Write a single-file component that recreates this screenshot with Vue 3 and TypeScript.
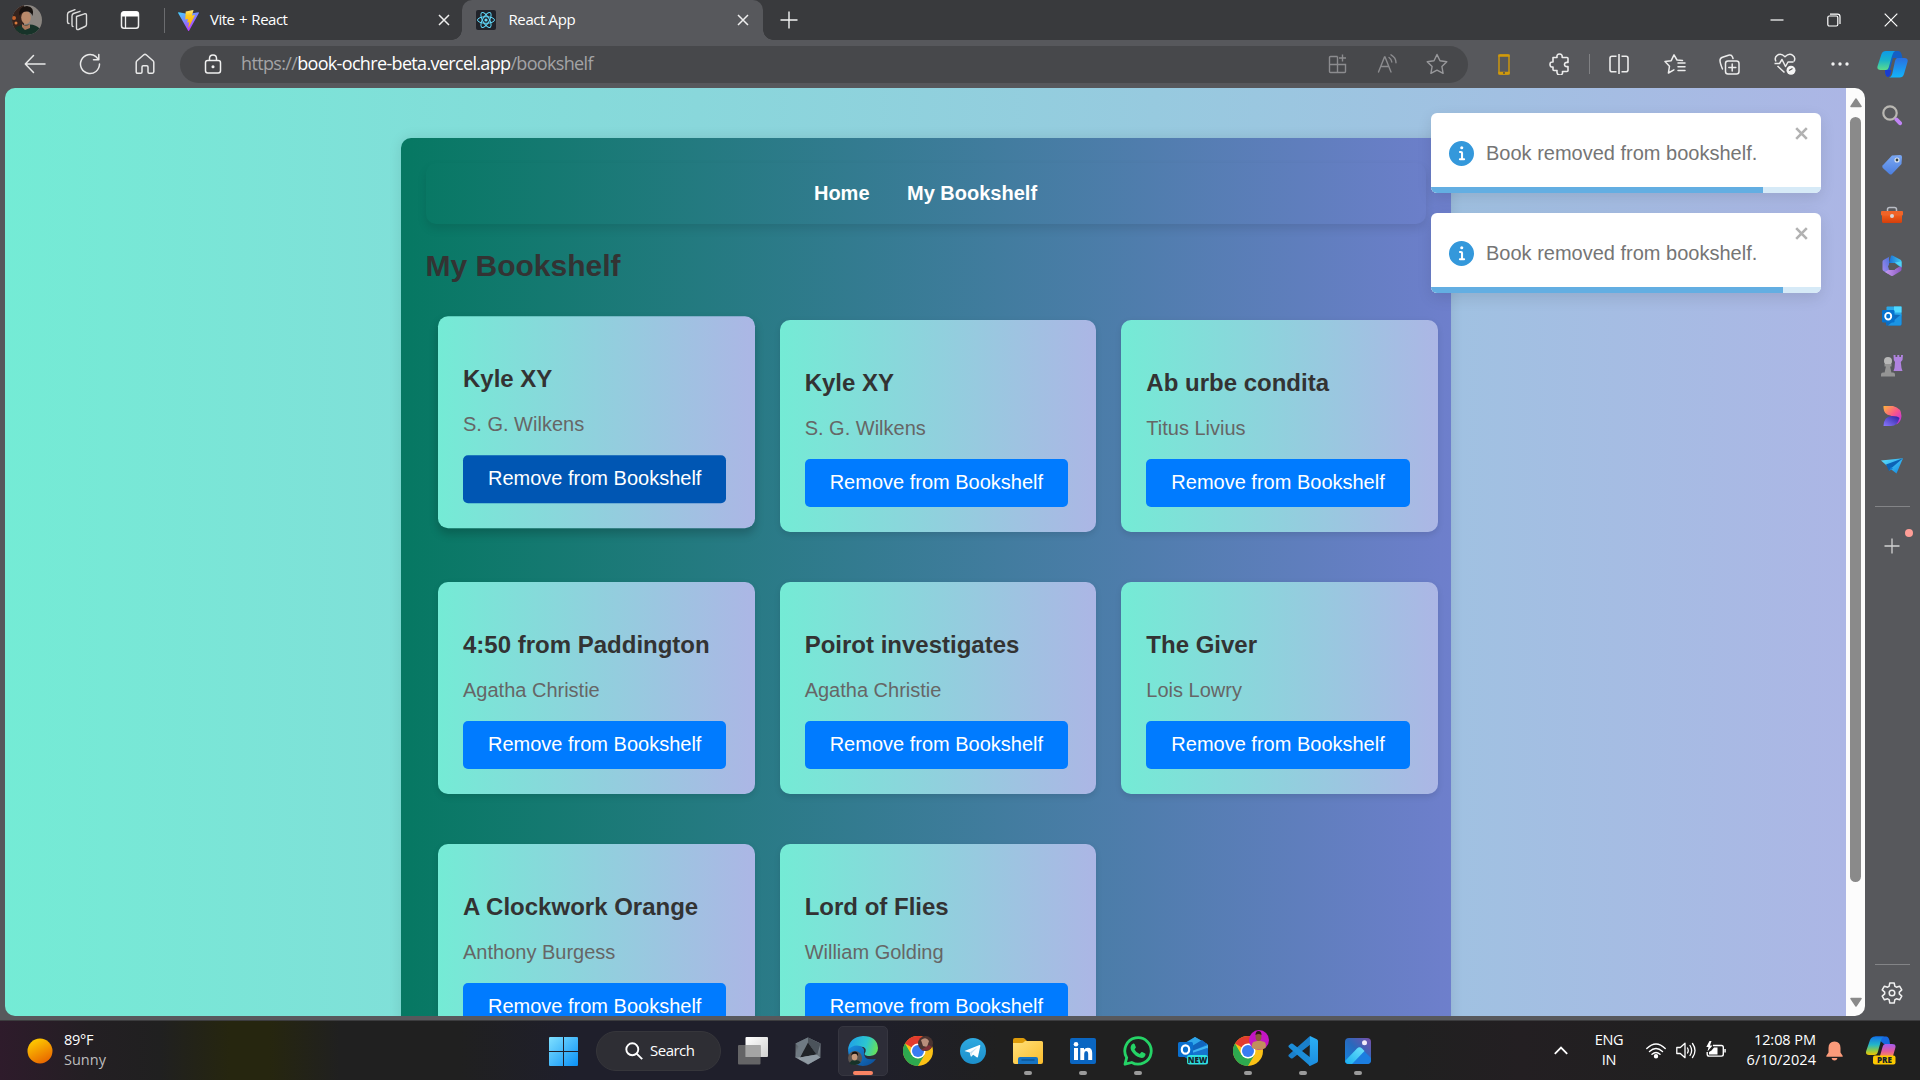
<script setup lang="ts">
interface Book {
  title: string
  author: string
  hovered?: boolean
}

interface Toast {
  id: number
  text: string
  progress: number
}

const books: Book[] = [
  { title: 'Kyle XY', author: 'S. G. Wilkens', hovered: true },
  { title: 'Kyle XY', author: 'S. G. Wilkens' },
  { title: 'Ab urbe condita', author: 'Titus Livius' },
  { title: '4:50 from Paddington', author: 'Agatha Christie' },
  { title: 'Poirot investigates', author: 'Agatha Christie' },
  { title: 'The Giver', author: 'Lois Lowry' },
  { title: 'A Clockwork Orange', author: 'Anthony Burgess' },
  { title: 'Lord of Flies', author: 'William Golding' },
]

const toasts: Toast[] = [
  { id: 1, text: 'Book removed from bookshelf.', progress: 85.1 },
  { id: 2, text: 'Book removed from bookshelf.', progress: 90.3 },
]
</script>

<template>
  <div class="screen">
    <svg class="defs" width="0" height="0">
      <defs>
        <linearGradient id="gVite" x1="0" y1="0" x2="0.6" y2="1"><stop offset="0" stop-color="#41d1ff" /><stop offset="1" stop-color="#bd34fe" /></linearGradient>
        <linearGradient id="gBolt" x1="0" y1="0" x2="0" y2="1"><stop offset="0" stop-color="#ffea83" /><stop offset="0.3" stop-color="#ffcc20" /><stop offset="1" stop-color="#ffa800" /></linearGradient>
        <linearGradient id="gCopA" x1="0" y1="0" x2="0" y2="1"><stop offset="0" stop-color="#0c9be8" /><stop offset="0.5" stop-color="#1bb3c8" /><stop offset="1" stop-color="#5ddc8a" /></linearGradient>
        <linearGradient id="gCopB" x1="0" y1="0" x2="0" y2="1"><stop offset="0" stop-color="#2a6fe0" /><stop offset="1" stop-color="#12b4fb" /></linearGradient>
        <linearGradient id="gPreA" x1="0" y1="0" x2="0" y2="1"><stop offset="0" stop-color="#1273e8" /><stop offset="0.45" stop-color="#23b6c9" /><stop offset="0.75" stop-color="#8bc94a" /><stop offset="1" stop-color="#f2c400" /></linearGradient>
        <linearGradient id="gPreB" x1="0" y1="0" x2="0" y2="1"><stop offset="0" stop-color="#a35cf0" /><stop offset="0.6" stop-color="#e35a9c" /><stop offset="1" stop-color="#f98a5a" /></linearGradient>
        <linearGradient id="gSun" x1="0.2" y1="0" x2="0.7" y2="1"><stop offset="0" stop-color="#ffd000" /><stop offset="1" stop-color="#e86400" /></linearGradient>
        <linearGradient id="gWin" x1="0" y1="0" x2="1" y2="1"><stop offset="0" stop-color="#7fe0ff" /><stop offset="1" stop-color="#0a90f5" /></linearGradient>
        <linearGradient id="gTag" x1="0" y1="0" x2="0" y2="1"><stop offset="0" stop-color="#7aa7f2" /><stop offset="1" stop-color="#4c7fe0" /></linearGradient>
        <linearGradient id="gBox" x1="0" y1="0" x2="0" y2="1"><stop offset="0" stop-color="#f4611d" /><stop offset="1" stop-color="#d43f0c" /></linearGradient>
        <linearGradient id="gM1" x1="0" y1="0" x2="1" y2="0"><stop offset="0" stop-color="#1a6fd6" /><stop offset="1" stop-color="#3fc9f2" /></linearGradient>
        <linearGradient id="gM2" x1="0" y1="1" x2="1" y2="0"><stop offset="0" stop-color="#a98af0" /><stop offset="1" stop-color="#3b6ed6" /></linearGradient>
        <linearGradient id="gM3" x1="0" y1="0" x2="1" y2="0"><stop offset="0" stop-color="#c79bf2" /><stop offset="1" stop-color="#8a58c0" /></linearGradient>
        <linearGradient id="gDesA" x1="0" y1="0" x2="1" y2="1"><stop offset="0" stop-color="#ffb43c" /><stop offset="0.5" stop-color="#f8568a" /><stop offset="1" stop-color="#b12bf5" /></linearGradient>
        <linearGradient id="gDesB" x1="0" y1="1" x2="1" y2="0"><stop offset="0" stop-color="#8a78ff" /><stop offset="1" stop-color="#2a1f9e" /></linearGradient>
        <linearGradient id="gSend" x1="0" y1="0" x2="1" y2="1"><stop offset="0" stop-color="#5fe3ff" /><stop offset="1" stop-color="#0f86e0" /></linearGradient>
        <linearGradient id="gEdgeA" x1="0" y1="0.3" x2="1" y2="0.5"><stop offset="0" stop-color="#1fa0e8" /><stop offset="0.6" stop-color="#2cc6d0" /><stop offset="1" stop-color="#66e05a" /></linearGradient>
        <linearGradient id="gEdgeB" x1="0" y1="0" x2="1" y2="1"><stop offset="0" stop-color="#1b8fe0" /><stop offset="1" stop-color="#0b4a94" /></linearGradient>
        <linearGradient id="gFold" x1="0" y1="0" x2="1" y2="1"><stop offset="0" stop-color="#ffe07a" /><stop offset="1" stop-color="#fbbd2c" /></linearGradient>
        <linearGradient id="gTele" x1="0" y1="0" x2="0" y2="1"><stop offset="0" stop-color="#2fa9e0" /><stop offset="1" stop-color="#1c8fcb" /></linearGradient>
        <linearGradient id="gVs" x1="0" y1="0" x2="0" y2="1"><stop offset="0" stop-color="#2bb0f5" /><stop offset="1" stop-color="#1c8de0" /></linearGradient>
        <linearGradient id="gPho" x1="0" y1="1" x2="1" y2="0"><stop offset="0" stop-color="#1484e0" /><stop offset="0.5" stop-color="#2869bd" /><stop offset="1" stop-color="#7a4fa8" /></linearGradient>
        <linearGradient id="gPho2" x1="0" y1="1" x2="1" y2="0"><stop offset="0" stop-color="#18aef0" /><stop offset="1" stop-color="#6fe3fb" /></linearGradient>
        <linearGradient id="gSq" x1="0" y1="0" x2="1" y2="1"><stop offset="0" stop-color="#ffffff" /><stop offset="1" stop-color="#d0d0d0" /></linearGradient>
        <linearGradient id="gHex" x1="0" y1="0" x2="1" y2="1"><stop offset="0" stop-color="#3c4248" /><stop offset="0.5" stop-color="#98a2aa" /><stop offset="1" stop-color="#474e55" /></linearGradient>
        <clipPath id="cAv"><circle cx="15" cy="15" r="15" /></clipPath>
        <clipPath id="cPho"><rect width="26" height="26" rx="4" /></clipPath>
      </defs>
    </svg>

    <!-- tab strip -->
    <header class="tabs">
      <svg class="avatar" width="30" height="30" viewBox="0 0 30 30">
        <g clip-path="url(#cAv)">
          <rect width="30" height="30" fill="#8a8580" /><rect width="12" height="30" fill="#35241e" />
          <circle cx="2" cy="13" r="2" fill="#c4622c" /><circle cx="4" cy="18" r="1.500" fill="#d97a3c" />
          <path d="M2 30V24q6-5 11-4 10-2 15 4v6z" fill="#173329" />
          <ellipse cx="14" cy="12.500" rx="4.800" ry="6.500" fill="#b98a6a" />
          <path d="M7.500 10.500Q6 1.500 15 1q8 1 5.500 10-1.500-4.500-5.500-4.500-5 0-7.500 4z" fill="#17120f" />
          <path d="M10 19q4 3 8 0l0 4-5 2-3-3z" fill="#a8775a" />
        </g>
      </svg>
      <div class="cell work">
        <svg width="24" height="24" viewBox="0 0 24 24" fill="none" stroke="#dcdcdc" stroke-width="1.400" stroke-linejoin="round" stroke-linecap="round">
          <path d="M11.500 8.500l8-2.700q2-.5 2 1.500v9.200q0 1.500-1.500 2l-6.500 3q-2 .6-2-1.500zM8 18.500q-1 0-1-1.500V8q0-1.800 1.500-2.500L15 3.300M4 15.500q-1.500 0-1.500-1.500V6.500q0-1.800 1.500-2.500l6-2.300" />
        </svg>
      </div>
      <div class="cell tabact">
        <svg width="20" height="20" viewBox="0 0 20 20"><rect x="1.500" y="1.800" width="17" height="16.500" rx="2.500" fill="none" stroke="#eee" stroke-width="1.500" /><path d="M1.500 3.500q0-2 2-2h13q2 0 2 2V6.500h-17z" fill="#fff" /><path d="M5.500 6v12" stroke="#eee" stroke-width="1.300" /></svg>
      </div>
      <i class="tab-sep"></i>
      <div class="tab idle">
        <svg class="fav" width="21" height="21" viewBox="0 0 256 257"><path fill="url(#gVite)" d="M255.200 37.900L134.900 252.900c-2.500 4.400-8.900 4.500-11.400 0L.8 37.900C-1.900 33.100 2.200 27.300 7.600 28.300L128 49.800c.8.100 1.600.1 2.300 0L248.200 28.300c5.400-1 9.600 4.700 7 9.600z" /><path fill="url(#gBolt)" d="M185.400 0L96.400 17.500c-1.500.3-2.500 1.500-2.600 3l-5.500 92.500c-.1 2.200 1.900 3.900 4 3.400l24.800-5.700c2.300-.5 4.400 1.500 3.900 3.800l-7.400 36.100c-.5 2.400 1.800 4.500 4.100 3.800l15.300-4.700c2.400-.7 4.600 1.400 4.100 3.800l-11.700 56.700c-.7 3.500 4 5.500 6 2.500l1.300-2 72.600-144.900c1.200-2.400-.9-5.200-3.500-4.700l-25.500 4.900c-2.400.5-4.400-1.800-3.800-4.100l16.700-57.700c.7-2.300-1.400-4.600-3.800-4.100z" /></svg>
        <span>Vite + React</span>
        <svg class="x" width="12" height="12" viewBox="0 0 12 12"><path d="M1 1l10 10M11 1L1 11" stroke="#eee" stroke-width="1.500" /></svg>
      </div>
      <div class="tab active">
        <svg class="fav" width="20" height="20" viewBox="0 0 20 20"><rect width="20" height="20" rx="2" fill="#20232a" /><g fill="none" stroke="#61dafb" stroke-width="1"><ellipse cx="10" cy="10" rx="8.500" ry="3.300" /><ellipse cx="10" cy="10" rx="8.500" ry="3.300" transform="rotate(60 10 10)" /><ellipse cx="10" cy="10" rx="8.500" ry="3.300" transform="rotate(120 10 10)" /></g><circle cx="10" cy="10" r="1.600" fill="#61dafb" /></svg>
        <span>React App</span>
        <svg class="x" width="12" height="12" viewBox="0 0 12 12"><path d="M1 1l10 10M11 1L1 11" stroke="#eee" stroke-width="1.500" /></svg>
      </div>
      <svg class="newtab" width="18" height="18" viewBox="0 0 18 18"><path d="M9 .5v17M.5 9h17" stroke="#f4f4f4" stroke-width="1.400" /></svg>
      <div class="winctl">
        <svg width="14" height="14" viewBox="0 0 14 14"><path d="M.5 7h13" stroke="#fff" stroke-width="1.200" /></svg>
        <svg width="14" height="14" viewBox="0 0 14 14" fill="none" stroke="#fff" stroke-width="1.200"><rect x=".8" y="3" width="10" height="10" rx="1.500" /><path d="M3 1.200h7.500q2.500 0 2.500 2.500V11" /></svg>
        <svg width="14" height="14" viewBox="0 0 14 14"><path d="M.7.7l12.600 12.600M13.300.7L.7 13.300" stroke="#fff" stroke-width="1.200" /></svg>
      </div>
    </header>

    <!-- toolbar -->
    <div class="toolbar">
      <div class="cell"><svg width="22" height="20" viewBox="0 0 22 20" fill="none" stroke="#e8e8e8" stroke-width="1.500" stroke-linecap="round" stroke-linejoin="round"><path d="M21 10H1.500M9.500 1.500L1.300 10l8.200 8.500" /></svg></div>
      <div class="cell"><svg width="22" height="22" viewBox="0 0 22 22" fill="none" stroke="#e8e8e8" stroke-width="1.500" stroke-linecap="round" stroke-linejoin="round"><path d="M20.500 11A9.500 9.500 0 1 1 17 3.700L19.500 6.500M19.800 1.500v5.200h-5.300" /></svg></div>
      <div class="cell"><svg width="20" height="22" viewBox="0 0 20 22" fill="none" stroke="#e8e8e8" stroke-width="1.500" stroke-linejoin="round"><path d="M1.200 9.500q0-1 .8-1.700l6.800-6q1.200-1 2.400 0l6.800 6q.8.700.8 1.700v9.300q0 1.400-1.400 1.400h-3.200q-1.200 0-1.200-1.200v-5q0-1.200-1.200-1.200H8.200Q7 12.800 7 14v5q0 1.200-1.200 1.200H2.600q-1.400 0-1.400-1.400z" /></svg></div>
      <div class="omnibox">
        <svg class="lock" width="18" height="20" viewBox="0 0 18 20" fill="none" stroke="#f0f0f0" stroke-width="1.500"><rect x="1.500" y="6.500" width="15" height="12.500" rx="2.200" /><path d="M5.500 6.500V4.500q0-3.500 3.500-3.500t3.500 3.500v2" /><circle cx="9" cy="12.700" r=".8" fill="#f0f0f0" /></svg>
        <span class="url">https://<b>book-ochre-beta.vercel.app</b>/bookshelf</span>
        <div class="omni-icons">
          <svg width="20" height="20" viewBox="0 0 20 20" fill="none" stroke="#8c8c8f" stroke-width="1.400"><path d="M9.500 2.500h-7q-1 0-1 1v14q0 1 1 1h14q1 0 1-1v-7h-16M9.500 2.500v16M14.500.5v7M11 4h7" /></svg>
          <svg width="20" height="20" viewBox="0 0 20 20" fill="none" stroke="#8c8c8f" stroke-width="1.400" stroke-linecap="round"><path d="M1.500 18L7.500 3h.5L14 18M3.700 12.500h8M12 3.500q2.500 1.500 2.800 4.500M14 .8q5 2.700 5 8" /></svg>
          <svg width="22" height="22" viewBox="0 0 22 22" fill="none" stroke="#98989b" stroke-width="1.400" stroke-linejoin="round"><path d="M11 1.500l3 6.200 6.800 1-4.900 4.800 1.200 6.800L11 17.100l-6.100 3.200 1.200-6.800L1.200 8.700l6.800-1z" /></svg>
        </div>
      </div>
      <div class="cell w56 first"><svg width="12" height="21" viewBox="0 0 12 21"><rect x="1" y="1" width="10" height="19" rx="1" fill="none" stroke="#d29a0a" stroke-width="1.400" /><path d="M.3.500h11.400v2.300H.3zM.3 17.700h11.400v2.800H.3z" fill="#d29a0a" /><circle cx="6" cy="19" r=".9" fill="#47484b" /></svg></div>
      <div class="cell w56"><svg width="22" height="22" viewBox="0 0 22 22" fill="none" stroke="#ececec" stroke-width="1.600" stroke-linejoin="round"><path d="M4 4.500h4Q7.500 1 10.500 1t2.700 3.500H18q1 0 1 1v4q-3.500-.5-3.500 2t3.500 2v4q0 1-1 1h-4.500q.5 3.500-2.700 3.500T8 17.500H5q-1 0-1-1V14q-3 .3-3-2.500T4 9z" /></svg></div>
      <i class="tool-sep"></i>
      <div class="cell w57"><svg width="20" height="20" viewBox="0 0 20 20" fill="none" stroke="#ececec" stroke-width="1.600"><path d="M7.500 2.300H3q-2 0-2 2v11.400q0 2 2 2h4.500M12.500 2.300H17q2 0 2 2v11.400q0 2-2 2h-4.500M10 0v20" /></svg></div>
      <div class="cell"><svg width="22" height="20" viewBox="0 0 22 20" fill="none" stroke="#ececec" stroke-width="1.500" stroke-linejoin="round" stroke-linecap="round"><path d="M18.500 6.500L13 6 10 .9 7.200 6.700 1 7.600l4.500 4.600L4.400 19l5.500-3.200M14 9h7M14 12.800h7M14 16.600h7" /></svg></div>
      <div class="cell"><svg width="21" height="21" viewBox="0 0 21 21" fill="none" stroke="#ececec" stroke-width="1.500" stroke-linecap="round"><rect x="6.500" y="7" width="13.500" height="13" rx="2.500" /><path d="M13.200 10v7M9.800 13.500h7M3.500 15Q1 9 1 6.500 1 4 3.500 3.200l6-2q3-.8 4 1.800l.5 1.500" /></svg></div>
      <div class="cell w56"><svg width="22" height="22" viewBox="0 0 22 22" fill="none" stroke="#ececec" stroke-width="1.500" stroke-linejoin="round"><path d="M2 8.500Q0 4.500 3.200 2.300 7-.2 11 3.800 15-.2 18.800 2.300 22 4.500 20 8.500M3.500 13l7 6.500M.5 10.500h5l2.500-4 3.500 7 2.500-4.500h5.500" /><circle cx="17" cy="17.300" r="4.500" fill="#f4f4f4" stroke="none" /><path d="M15 17.500l3.500-2" stroke="#555" stroke-width="1.200" /></svg></div>
      <div class="cell dots"><svg width="18" height="4" viewBox="0 0 18 4" fill="#f2f2f2"><circle cx="2" cy="2" r="1.700" /><circle cx="9" cy="2" r="1.700" /><circle cx="16" cy="2" r="1.700" /></svg></div>
      <div class="cell cop"><svg width="31" height="28" viewBox="0 0 31 28"><path d="M8 1h13q2.500 0 3.500 3l1 4H16l-5 19q-2 0-3-4z" fill="#155fc4" /><path d="M9 1h9q-2 1-3 5l-3.300 11.500Q10.800 20 9 20H3.500Q-.5 20 .6 16L4.500 4Q5.500 1 9 1z" fill="url(#gCopA)" /><path d="M20.500 8h7q4 0 3 4l-3.500 12q-1 3.500-4.500 3.500H12q2.500-.5 3.300-4L18 11q.7-3 2.500-3z" fill="url(#gCopB)" /><path d="M8 20h6.500l-1 4q-.7 3-2.500 3t-2.500-3z" fill="#1a3bd0" /></svg></div>
    </div>

    <!-- web page and sidebar -->
    <div class="middle">
      <main class="page">
        <div class="viewport">
          <div class="container">
            <nav class="nav"><a>Home</a><a>My Bookshelf</a></nav>
            <h2>My Bookshelf</h2>
            <div class="grid">
              <article v-for="(book, i) in books" :key="i" class="card" :class="{ hovered: book.hovered }">
                <h3>{{ book.title }}</h3>
                <p>{{ book.author }}</p>
                <button>Remove from Bookshelf</button>
              </article>
            </div>
          </div>
        </div>
        <div class="scrollbar">
          <svg width="12" height="10" viewBox="0 0 12 10"><path d="M6 1l5 7.500H1z" fill="#8a8a8a" stroke="#8a8a8a" stroke-width="1.500" stroke-linejoin="round" /></svg>
          <div class="thumb"></div>
          <svg class="down" width="12" height="10" viewBox="0 0 12 10"><path d="M6 9l5-7.500H1z" fill="#8a8a8a" stroke="#8a8a8a" stroke-width="1.500" stroke-linejoin="round" /></svg>
        </div>
        <div class="toasts">
          <div v-for="t in toasts" :key="t.id" class="toast">
            <div class="toast-body">
              <svg width="25" height="25" viewBox="0 0 24 24" fill="#3498db"><path d="M12 0a12 12 0 1012 12A12.013 12.013 0 0012 0zm.25 5a1.500 1.500 0 11-1.500 1.500 1.500 1.500 0 011.500-1.500zm2.250 13.500h-4a1 1 0 010-2h.75a.25.25 0 00.25-.25v-4.500a.25.25 0 00-.25-.25h-.75a1 1 0 010-2h1a2 2 0 012 2v4.750a.25.25 0 00.25.25h.75a1 1 0 110 2z" /></svg>
              <span>{{ t.text }}</span>
              <svg class="close" width="13" height="13" viewBox="0 0 13 13"><path d="M1.200 1.200l10.600 10.600M11.800 1.200L1.200 11.800" stroke="#b2b2b2" stroke-width="2.600" /></svg>
            </div>
            <div class="track"><div class="fill" :style="{ width: t.progress + '%' }"></div></div>
          </div>
        </div>
      </main>

      <aside class="sidebar">
        <div class="side"><svg width="22" height="22" viewBox="0 0 22 22"><circle cx="9" cy="9" r="6.700" fill="none" stroke="#b9b7b2" stroke-width="2.200" /><path d="M15.500 15.500l3.500 3.700" stroke="#c084f5" stroke-width="4" stroke-linecap="round" /></svg></div>
        <div class="side"><svg width="22" height="22" viewBox="0 0 22 22"><path d="M11 1.500L19 1q2 0 2 2l-.5 7-9.500 10q-1.300 1.200-2.700 0L1.800 14q-1.200-1.300 0-2.700z" fill="url(#gTag)" /><circle cx="16" cy="6" r="2" fill="#344" stroke="#dfe4ee" stroke-width="1.200" /></svg></div>
        <div class="side"><svg width="22" height="18" viewBox="0 0 22 18"><path d="M6.500 6V3.500q0-2 2-2h5q2 0 2 2V6" fill="none" stroke="#b9bcc4" stroke-width="1.500" /><rect x="1" y="8" width="20" height="9" rx="1.500" fill="url(#gBox)" /><rect y="5" width="22" height="4.500" rx="1" fill="#f06428" /><circle cx="11" cy="10" r="2" fill="#d5d5d8" /></svg></div>
        <div class="side"><svg width="22" height="22" viewBox="0 0 22 22"><path d="M10 .8q1-.5 2 0l7.500 4q1 .6 1 1.700v6.300L13.800 8 8 8z" fill="url(#gM1)" /><path d="M10.500.6L8 2v9.500L7.500 19 2.500 16q-1-.6-1-1.800V6.800q0-1.200 1-1.800z" fill="url(#gM2)" /><path d="M4 17l4-2.500h5.500l7-4v4q0 1.200-1 1.800l-7.500 4.500q-1 .6-2 0z" fill="url(#gM3)" /><path d="M13.800 7.500l6.700 4.800V6.500z" fill="#4fd3f7" /><path d="M8.500 8.500h5.500l2 3-2.500 3.500H8.500l-1.500-3.500z" fill="#57585c" /></svg></div>
        <div class="side"><svg width="20" height="20" viewBox="0 0 20 20"><rect x="4.500" y=".5" width="15" height="10" rx="1" fill="#28a8ea" /><rect x="12" y=".5" width="7.500" height="6" fill="#50d9ff" /><path d="M4 8l15.500 1v9q0 1.500-1.500 1.500H4z" fill="#0f6cbd" /><path d="M19.500 8v10q0 1.500-1.500 1.500H6z" fill="#1b95e5" /><rect y="4" width="12.500" height="12.500" rx="1.300" fill="#0572cf" /><ellipse cx="6.200" cy="10.200" rx="3" ry="3.300" fill="none" stroke="#fff" stroke-width="1.900" /></svg></div>
        <div class="side"><svg width="22" height="22" viewBox="0 0 22 22"><path d="M12.500 0h2v2h1.800V0h2v2H20V0h2l-.5 5-1.700 2 .7 6 1 3h-9l1-3 .5-6-1.200-2z" fill="#b083df" /><circle cx="7" cy="6" r="4" fill="#b7b7b7" /><path d="M3.500 9h7v2.500h-7zM5 11h4l1.500 7h-7zM0 21.500v-2Q0 17.500 2 17.500h10q2 0 2 2v2z" fill="#949494" /></svg></div>
        <div class="side"><svg width="19" height="22" viewBox="0 0 19 22"><path d="M.5 1H10q8.500 2 8.500 10-.5 6-5 8.500 0-7-6-9Q1 10 .5 3z" fill="url(#gDesA)" /><path d="M.5 21Q1 11 9 11q6 0 7.500 2-2 8-8.500 8z" fill="url(#gDesB)" /></svg></div>
        <div class="side"><svg width="22" height="16" viewBox="0 0 22 16"><path d="M0 2.500L22 .3 15.500 15.500 9 10.500z" fill="url(#gSend)" /><path d="M22 .3L5 6.500 8 13l2.500-3z" fill="#0c62b5" /><path d="M8 13l4-2.500-2-1.500z" fill="#1380d8" /></svg></div>
        <i class="side-line"></i>
        <div class="plus">
          <svg width="16" height="16" viewBox="0 0 16 16"><path d="M8 .5v15M.5 8h15" stroke="#d2d2d2" stroke-width="1.300" /></svg>
          <i class="dot"></i>
        </div>
        <div class="side-foot">
          <i class="side-line"></i>
          <svg width="22" height="22" viewBox="0 0 22 22" fill="none" stroke="#f0f0f0" stroke-width="1.500" stroke-linejoin="round"><path d="M8.800 1h4.400l.7 3.300 1.500.9 3.200-1 2.200 3.700-2.500 2.200v1.800l2.500 2.200-2.200 3.700-3.200-1-1.500.9-.7 3.300H8.800l-.7-3.300-1.500-.9-3.200 1L1.200 14.100l2.500-2.200v-1.800L1.200 7.900l2.200-3.700 3.200 1 1.500-.9z" /><circle cx="11" cy="11" r="2.800" /></svg>
        </div>
      </aside>
    </div>

    <!-- taskbar -->
    <footer class="taskbar">
      <div class="weather">
        <svg width="26" height="26" viewBox="0 0 26 26"><circle cx="13" cy="13" r="12.500" fill="url(#gSun)" /></svg>
        <div class="lines"><span>89°F</span><span class="dim">Sunny</span></div>
      </div>
      <svg class="start" width="29" height="29" viewBox="0 0 29 29" fill="url(#gWin)"><path d="M1 0h13v14H0V1q0-1 1-1zM15 0h13q1 0 1 1v13H15zM0 15h14v14H1q-1 0-1-1zM15 15h14v13q0 1-1 1H15z" /></svg>
      <div class="search">
        <svg width="18" height="18" viewBox="0 0 18 18" fill="none" stroke="#fff" stroke-width="1.900"><circle cx="7.300" cy="7.300" r="6" /><path d="M11.600 11.600l5.600 5.600" /></svg>
        <span>Search</span>
      </div>
      <div class="apps">
        <div class="app"><svg width="30" height="30" viewBox="0 0 30 30"><rect x="7.500" y="1" width="22.500" height="20" rx="1" fill="url(#gSq)" /><rect y="9" width="22.500" height="19.500" rx="1" fill="#6e6e6e" opacity=".88" /><rect x="7.500" y="9" width="15" height="12" fill="#a5a5a5" /></svg></div>
        <div class="app"><svg width="28" height="30" viewBox="0 0 28 30"><path d="M14 1.500l12.500 6v14L14 28.500l-12.500-7v-14z" fill="url(#gHex)" /><path d="M14 1.500v5L6 21l-4.500.5 3-11-3-3z" fill="#6f7a83" /><path d="M14 1.500l12.500 6-3.500 12-9-13z" fill="#4b535b" /><path d="M14 6.500l8.500 12L6 21.500z" fill="#202328" /><path d="M6 21.500l16.500-3 4 3-12.500 7z" fill="#8f9aa3" /></svg></div>
        <div class="app on">
          <svg width="30" height="30" viewBox="0 0 30 30"><path d="M0 14Q1 1 15 0q14 0 15 12 0 7-8 8-5 0-5.500-2 3-5-1-7Q7 9 0 14z" fill="url(#gEdgeA)" /><path d="M0 14q5-6 12-4 5 2 4 6-1 9 12 7-5 7-13 7Q1 29 0 14z" fill="url(#gEdgeB)" /><g transform="translate(0 15) scale(.47)"><circle cx="15" cy="15" r="15" fill="#5e5550" /><path d="M3 26q4-8 12-7 8 0 12 5-5 6-12 6-8 0-12-4z" fill="#173329" /><ellipse cx="14" cy="12" rx="6" ry="8" fill="#c79b7d" /><path d="M7 10Q7 1 15 1q8 1 6 10-2-5-6-5-6 0-8 4z" fill="#17120f" /></g></svg>
          <i class="ind hot"></i>
        </div>
        <div class="app">
          <svg width="30" height="30" viewBox="0 0 30 30"><circle cx="15" cy="15" r="15" fill="#fbc116" /><path d="M15 15L2 7.500A15 15 0 0 1 28 7.500H15z" fill="#e33b2e" /><path d="M15 30A15 15 0 0 1 2 7.500L8.500 18.700 15 22.500l6.500-3.800z" fill="#2da94f" /><circle cx="15" cy="15" r="7.500" fill="#fff" /><circle cx="15" cy="15" r="6" fill="#3a7cf0" /><circle cx="22.500" cy="7.500" r="7.500" fill="#4b3430" /><path d="M18 4q5-4 8 1l-2 6-4-1z" fill="#b98f7c" /><path d="M18 14l8-5 3 2q-4 5-11 3z" fill="#7d3038" /></svg>
        </div>
        <div class="app"><svg width="26" height="26" viewBox="0 0 26 26"><circle cx="13" cy="13" r="13" fill="url(#gTele)" /><path d="M5 12.800L19.500 7q1-.3.8.9L18 18.800q-.3 1.200-1.300.5l-3.500-2.600-1.800 1.800q-.5.500-.7-.3l-1-3.700-4.600-1.300q-.9-.2-.1-.4z" fill="#fff" /><path d="M10 14.200l7.500-4.900-5.700 6-.5 2.700z" fill="#c4dff0" /></svg></div>
        <div class="app">
          <svg width="30" height="26" viewBox="0 0 30 26"><path d="M0 2q0-2 2-2h8q1 0 2 1l2 2-4 4H0z" fill="#dd9b0a" /><path d="M0 5h9q1 0 2-1l1-1h16.500Q30 3 30 4.500V24q0 2-2 2H2q-2 0-2-2z" fill="url(#gFold)" /><path d="M5 26v-5q0-2 2-2h16q2 0 2 2v5z" fill="#1674c4" /><path d="M8.500 22h13" stroke="#0b4f8e" stroke-width="1.200" /></svg>
          <i class="ind"></i>
        </div>
        <div class="app">
          <svg width="26" height="26" viewBox="0 0 26 26"><rect width="26" height="26" rx="2" fill="#0a66c2" /><circle cx="6" cy="6.200" r="2.300" fill="#fff" /><path d="M4 10h4v12H4zM10.300 10H14v1.700q1.200-2 3.900-2 4.300 0 4.300 5.300v7h-4v-6.300q0-2.700-2-2.700-2 0-2 2.700V22h-3.900z" fill="#fff" /></svg>
          <i class="ind"></i>
        </div>
        <div class="app">
          <svg width="30" height="30" viewBox="0 0 30 30"><path d="M2 28.200l1.700-6.500A13.200 13.200 0 1 1 8.700 26.500z" fill="none" stroke="#25d366" stroke-width="2.800" stroke-linejoin="round" /><path d="M10.300 7.500q.8-.3 1.300.6l1.200 2.800q.2.700-.3 1.200l-1 1.300q1.800 3.300 5.200 4.700l1.500-1.800q.4-.5 1-.2l2.900 1.400q.6.300.4 1.200-.6 3-3.700 3.200-4.200 0-8.300-4.300Q7.200 14 7.600 11q.5-2.700 2.700-3.500z" fill="#25d366" /></svg>
          <i class="ind"></i>
        </div>
        <div class="app">
          <svg width="30" height="30" viewBox="0 0 30 30"><path d="M5 8l12-7 12 7v11H5z" fill="#1b8fe0" /><path d="M8 7l9-6 12 7-14 9z" fill="#2fa6ea" /><path d="M14 10l10-6 5 4-14 9z" fill="#1164bd" /><path d="M14 15l16-7v14H14z" fill="#1270cc" /><path d="M14 15l16-6v3L16 20z" fill="#3fb4f2" /><path d="M5 20l12 8 12-6V12z" fill="#1675cf" /><rect y="6" width="15" height="15" rx="1.500" fill="#0a6fce" /><ellipse cx="7.500" cy="13.500" rx="3.700" ry="4.200" fill="none" stroke="#fff" stroke-width="2.200" /><rect x="9" y="19" width="21" height="9.500" rx="2.500" fill="#2fe0e2" /><text x="19.500" y="26.500" class="badge" text-anchor="middle">NEW</text></svg>
        </div>
        <div class="app">
          <svg class="tall" width="36" height="36" viewBox="0 0 36 36"><g transform="translate(0 6)"><circle cx="15" cy="15" r="15" fill="#fbc116" /><path d="M15 15L2 7.500A15 15 0 0 1 28 7.500H15z" fill="#e33b2e" /><path d="M15 30A15 15 0 0 1 2 7.500L8.500 18.700 15 22.500l6.500-3.800z" fill="#2da94f" /><circle cx="15" cy="15" r="7.500" fill="#fff" /><circle cx="15" cy="15" r="6" fill="#3a7cf0" /></g><circle cx="26" cy="10" r="10" fill="#c414c4" /><path d="M19 18q-1-6 3-6.500l4-1 4 1q4 .5 2.500 6.500-6 3.500-13.500 0z" fill="#c08f5c" /><ellipse cx="25.500" cy="6.500" rx="3" ry="4.500" fill="#8a5a3a" /><path d="M22.500 5q0-4 3-4t3 4q-3-2-6 0z" fill="#2a1714" /></svg>
          <i class="ind"></i>
        </div>
        <div class="app">
          <svg width="30" height="30" viewBox="0 0 30 30"><path d="M22 0L1 18.500q-1.200 1.200 0 2.200l1.800 1.600q.9.600 1.900 0L23 8z" fill="#1a7fca" /><path d="M22 30L1 11.500q-1.200-1.200 0-2.200l1.800-1.600q.9-.6 1.900 0L23 22z" fill="#1c8dd8" /><path d="M22 0l6.800 3.200q1.200.6 1.200 2v19.600q0 1.400-1.200 2L22 30q-1.300 0-.5-1.500z" fill="url(#gVs)" /></svg>
          <i class="ind"></i>
        </div>
        <div class="app">
          <svg width="26" height="26" viewBox="0 0 26 26"><g clip-path="url(#cPho)"><rect width="26" height="26" fill="url(#gPho)" /><path d="M0 24L12 11q2.500-2.500 5 0l9 9v6H0z" fill="#1c7ee0" /><path d="M0 23L12 10.500q2.500-2.500 5 0l2.500 2.500L7 26H0z" fill="url(#gPho2)" /></g><circle cx="19.500" cy="4.700" r="2.500" fill="#f3ecf8" /></svg>
          <i class="ind"></i>
        </div>
      </div>
      <div class="tray">
        <svg class="chev" width="14" height="9" viewBox="0 0 14 9"><path d="M.8 7.800L7 1.600l6.200 6.200" fill="none" stroke="#fff" stroke-width="1.800" /></svg>
        <div class="lines lang"><span>ENG</span><span>IN</span></div>
        <svg class="wifi" width="20" height="16" viewBox="0 0 20 16" fill="none" stroke="#fff" stroke-width="1.400" stroke-linecap="round"><path d="M.8 5.500Q10-3.500 19.200 5.500M3.500 8.500q6.500-6 13 0M6 11.300q4-3.500 8 0" /><circle cx="10" cy="13.300" r="1.500" fill="#fff" /></svg>
        <svg class="vol" width="20" height="17" viewBox="0 0 20 17" fill="none" stroke="#fff" stroke-width="1.300" stroke-linejoin="round" stroke-linecap="round"><path d="M.8 5.500h3.500L9 1.300v14.400l-4.700-4.200H.8zM11.500 6q1.500 2.500 0 5M14 3.500q3.300 5 0 10M16.500 1.500q5 7 0 14" /></svg>
        <svg class="bat" width="20" height="17" viewBox="0 0 20 17"><path d="M7 4.500h8.500q1.800 0 1.800 1.800v7q0 1.800-1.800 1.800H3q-1.800 0-1.800-1.800V11" fill="none" stroke="#fff" stroke-width="1.400" /><path d="M3 11l2.500-1.500L8 6.500h3.500v7H3z" fill="#fff" /><path d="M18.300 8h1.500v3.500h-1.500zM3.500 0L.3 6h2.200L1.500 10.500 6.500 4.500H4L5.500 0z" fill="#fff" /></svg>
        <div class="lines clock"><span>12:08 PM</span><span class="date">6/10/2024</span></div>
        <svg class="bell" width="17" height="20" viewBox="0 0 17 20" fill="#fb9b7a"><path d="M8.500.5q6 .3 6 6.500v4.500l2.300 3.500q.2.700-.6.700H.8Q0 15.700.2 15l2.300-3.500V7q0-6.200 6-6.500zM5.500 17h6q-.7 2.500-3 2.500t-3-2.500z" /></svg>
        <svg class="pre" width="30" height="29" viewBox="0 0 30 29"><path d="M9 .5h11q2.500 0 3.500 4L24 8h-6z" fill="#1668e0" /><path d="M9 .5h9q-2.500 1-3.300 5L12 15.500Q11.300 19 8 19H3q-4 0-2.800-4L4 4Q5.500.5 9 .5z" fill="url(#gPreA)" /><path d="M19 8h7q4.500 0 3.300 4L27 20H14l2.700-9.500Q17.400 8 19 8z" fill="url(#gPreB)" /><rect x="7" y="19.500" width="22.500" height="9" rx="2" fill="#fcc800" /><text x="18.500" y="26.800" class="badge" text-anchor="middle">PRE</text></svg>
      </div>
    </footer>
  </div>
</template>

<style>
body {
  margin: 0;
  overflow: hidden;
}
</style>

<style scoped>
* {
  box-sizing: border-box;
}
.screen {
  width: 1920px;
  height: 1080px;
  display: flex;
  flex-direction: column;
  background: #57585c;
  font-family: 'Open Sans', 'Noto Sans', sans-serif;
  overflow: hidden;
}
.screen svg {
  flex: none;
  display: block;
}
.defs {
  position: absolute;
}
i {
  display: block;
  flex: none;
}

/* tab strip */
.tabs {
  height: 40px;
  flex: none;
  display: flex;
  align-items: center;
  background: #393a3d;
  color: #fff;
}
.avatar {
  margin-left: 12px;
}
.cell {
  width: 55px;
  flex: none;
  display: flex;
  align-items: center;
  justify-content: center;
}
.work {
  margin-left: 7px;
}
.tabact {
  width: 51px;
}
.tab-sep {
  width: 1px;
  height: 25px;
  margin-left: 9px;
  background: #6b6c6f;
}
.tab {
  height: 40px;
  display: flex;
  align-items: center;
  font-size: 15px;
  line-height: 38px;
  letter-spacing: -0.5px;
}
.tab span {
  flex: 1;
  height: 40px;
  white-space: nowrap;
}
.idle {
  width: 297px;
  padding: 0 12px 0 13px;
}
.idle span {
  padding-left: 11px;
  word-spacing: 1px;
}
.active {
  position: relative;
  width: 301px;
  background: #57585c;
  border-radius: 10px 10px 0 0;
  padding: 0 14px;
}
.active span {
  padding-left: 12.5px;
  letter-spacing: -0.4px;
}
.active::before,
.active::after {
  content: '';
  position: absolute;
  bottom: 0;
  width: 10px;
  height: 10px;
}
.active::before {
  left: -10px;
  background: radial-gradient(circle at 0 0, transparent 9.5px, #57585c 10px);
}
.active::after {
  right: -10px;
  background: radial-gradient(circle at 100% 0, transparent 9.5px, #57585c 10px);
}
.newtab {
  margin-left: 17px;
}
.winctl {
  margin-left: auto;
  margin-right: 22px;
  display: flex;
  gap: 43px;
}

/* toolbar */
.toolbar {
  height: 48px;
  flex: none;
  display: flex;
  align-items: center;
  padding-left: 7.5px;
}
.omnibox {
  margin-left: 7.5px;
  width: 1288px;
  height: 37px;
  border-radius: 19px;
  background: #47484b;
  display: flex;
  align-items: center;
  padding-left: 23.5px;
}
.url {
  margin-left: 19.5px;
  font-size: 18px;
  height: 37px;
  line-height: 35px;
  color: #a3a3a5;
  letter-spacing: -0.66px;
  white-space: nowrap;
}
.url b {
  font-weight: 400;
  color: #fff;
}
.omni-icons {
  margin-left: auto;
  margin-right: 20px;
  display: flex;
  align-items: center;
  gap: 29px;
}
.w56 {
  width: 56px;
}
.w57 {
  width: 57px;
}
.first {
  margin-left: 8px;
}
.tool-sep {
  width: 1px;
  height: 20px;
  margin: 0 0 0 1px;
  background: #808184;
}
.dots {
  width: 53px;
}
.cop {
  width: 53px;
}

/* page */
.middle {
  height: 928px;
  flex: none;
  display: flex;
  padding-left: 5px;
}
.page {
  position: relative;
  width: 1860px;
  flex: none;
  display: flex;
  border-radius: 10px;
  overflow: hidden;
  font-family: 'Liberation Sans', Arial, sans-serif;
}
.viewport {
  width: 1841px;
  height: 928px;
  overflow: hidden;
  background: linear-gradient(to right, #74ebd5, #acb6e5);
  padding-top: 50px;
}
.container {
  width: 1050px;
  height: 1040px;
  margin: 0 auto;
  padding: 25px;
  border-radius: 10px;
  background: linear-gradient(to right, #067862, #6e7fcc);
  box-shadow: 0 0 12.5px rgba(0, 0, 0, 0.1);
}
.nav {
  height: 61px;
  display: flex;
  justify-content: center;
  gap: 37.5px;
  border-radius: 10px;
  box-shadow: 0 5px 10px rgba(0, 0, 0, 0.1);
  font-size: 20px;
  font-weight: 700;
  line-height: 24px;
  padding-top: 18px;
  color: #fff;
}
h2 {
  margin: 25px 0 0;
  font-size: 30px;
  line-height: 34px;
  color: #333;
}
.grid {
  width: 1000px;
  margin: 37px 0 0 12.5px;
  display: grid;
  grid-template-columns: repeat(3, 1fr);
  gap: 50px 25px;
}
.card {
  height: 212px;
  padding: 49px 25px 25px;
  border-radius: 10px;
  background: linear-gradient(to right, #74ebd5, #acb6e5);
  box-shadow: 0 2.5px 6px rgba(0, 0, 0, 0.1);
}
.card.hovered {
  transform: translateY(-3.75px);
  box-shadow: 0 5px 10px rgba(0, 0, 0, 0.2);
}
h3 {
  margin: 0;
  font-size: 24px;
  line-height: 28px;
  color: #333;
}
.card p {
  margin: 19px 0;
  font-size: 20px;
  line-height: 24px;
  color: #666;
}
button {
  display: block;
  height: 48px;
  padding: 0 25px 2px;
  border: 0;
  border-radius: 5px;
  background: #007bff;
  color: #fff;
  font: 20px/46px 'Liberation Sans', Arial, sans-serif;
  white-space: nowrap;
}
.hovered button {
  background: #0056b3;
}

.scrollbar {
  width: 19px;
  height: 928px;
  background: #fcfcfc;
  display: flex;
  flex-direction: column;
  align-items: center;
  padding: 10px 0 9px;
}
.thumb {
  width: 11px;
  height: 765px;
  margin-top: 9px;
  border-radius: 6px;
  background: #8a8a8a;
}
.down {
  margin-top: auto;
}

.toasts {
  position: absolute;
  top: 25px;
  right: 44px;
  width: 390px;
  display: flex;
  flex-direction: column;
  gap: 20px;
}
.toast {
  height: 80px;
  border-radius: 6px;
  background: #fff;
  overflow: hidden;
  display: flex;
  flex-direction: column;
  justify-content: space-between;
  box-shadow: 0 5px 15px rgba(0, 0, 0, 0.1);
}
.toast-body {
  height: 74px;
  display: flex;
  align-items: center;
  padding: 6px 13px 0 18px;
  font-size: 20px;
  line-height: 24px;
  color: #757575;
}
.toast-body span {
  flex: 1;
  margin-left: 12px;
  white-space: nowrap;
}
.close {
  align-self: flex-start;
  margin-top: 8px;
}
.track {
  height: 6px;
  background: #d6eaf7;
}
.fill {
  height: 6px;
  background: #63aee2;
}

/* sidebar */
.sidebar {
  width: 55px;
  display: flex;
  flex-direction: column;
  align-items: center;
  padding: 2px 1px 0 0;
}
.side {
  height: 50.2px;
  flex: none;
  display: flex;
  align-items: center;
}
.side-line {
  width: 35px;
  height: 1px;
  background: #838487;
}
.sidebar > .side-line {
  margin-top: 14px;
}
.plus {
  position: relative;
  margin-top: 31px;
}
.dot {
  position: absolute;
  left: 21px;
  top: -9px;
  width: 8px;
  height: 8px;
  border-radius: 50%;
  background: #ff9e97;
}
.side-foot {
  margin-top: auto;
  margin-bottom: 12px;
  display: flex;
  flex-direction: column;
  align-items: center;
  gap: 17px;
}

/* taskbar */
.taskbar {
  height: 60px;
  margin-top: 4px;
  flex: none;
  display: flex;
  align-items: center;
  color: #fff;
  border-top: 1px solid #3c3c3e;
  background: linear-gradient(to right, #2e1b2b 0, #231f23 90px, #202020 160px, #26260f 230px, #26260f 270px, #202020 340px, #202020 460px, #1f1f2b 570px, #1f1f2b 860px, #202020 1000px, #202020 1400px, #231f22 1520px, #202020 1700px);
}
.weather {
  width: 549px;
  padding-left: 27px;
  display: flex;
  align-items: center;
}
.lines {
  display: flex;
  flex-direction: column;
  margin-top: -2px;
  font-size: 14.5px;
  line-height: 20px;
  letter-spacing: -0.3px;
  white-space: nowrap;
}
.weather .lines {
  margin-left: 11px;
}
.dim {
  color: #bdbdbd;
  letter-spacing: 0;
}
.start {
  margin-top: 1px;
}
.search {
  width: 125px;
  height: 40px;
  margin-left: 18px;
  border-radius: 20px;
  background: #2e2e34;
  border: 1px solid #36363b;
  display: flex;
  align-items: center;
  padding-left: 28px;
  font-size: 15px;
  letter-spacing: -0.5px;
}
.search span {
  margin: -2px 0 0 7px;
}
.apps {
  margin-left: 4.5px;
  display: flex;
}
.app {
  position: relative;
  width: 55px;
  height: 50px;
  display: flex;
  align-items: center;
  justify-content: center;
}
.on::before {
  content: '';
  position: absolute;
  inset: 0 2.5px;
  border-radius: 5px;
  background: #2d2d38;
  border: 1px solid #363640;
}
.on svg {
  position: relative;
}
.tall {
  margin: -6px 0 0 6px;
}
.ind {
  position: absolute;
  bottom: 1px;
  left: 50%;
  width: 8px;
  height: 4px;
  margin-left: -4px;
  border-radius: 2px;
  background: #9a9a9a;
}
.hot {
  width: 20px;
  margin-left: -10px;
  background: #f98464;
}
.badge {
  font-family: 'Open Sans', sans-serif;
  font-weight: 800;
  font-size: 8px;
  fill: #14212a;
}
.tray {
  margin-left: auto;
  margin-right: 24px;
  display: flex;
  align-items: center;
}
.lang {
  width: 30px;
  align-items: center;
  margin-left: 26px;
}
.wifi {
  margin-left: 22px;
}
.vol,
.bat {
  margin-left: 10px;
}
.bat {
  margin-top: -2px;
}
.clock {
  width: 90px;
  align-items: flex-end;
  letter-spacing: -0.05px;
}
.date {
  letter-spacing: 0.08px;
}
.bell {
  margin-left: 10px;
}
.pre {
  margin-left: 23px;
}
</style>
